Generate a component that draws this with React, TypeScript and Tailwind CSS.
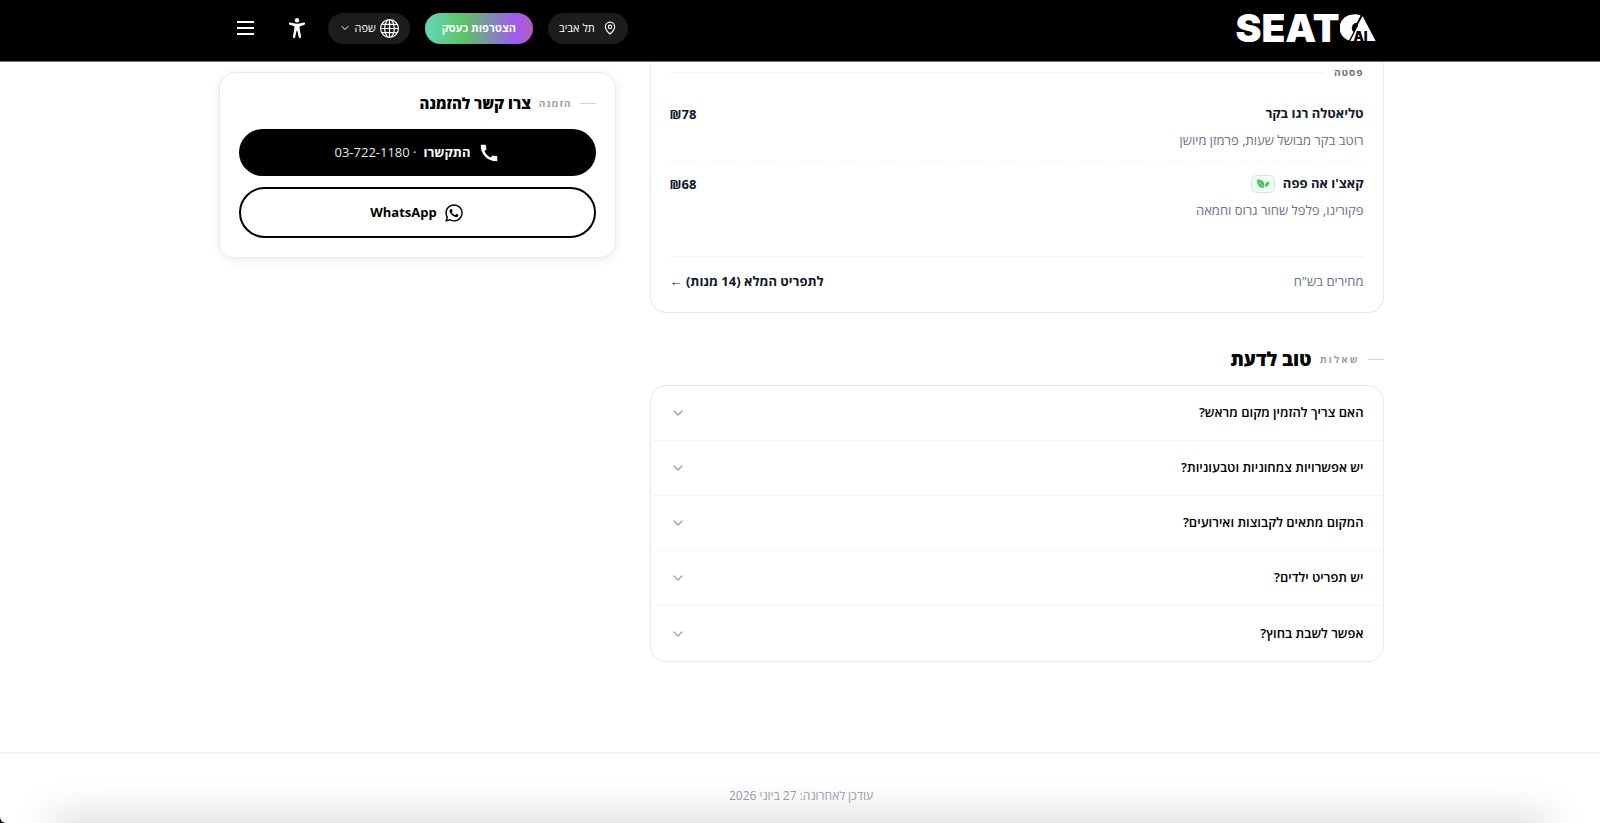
import { useState } from 'react';
import { ChevronDown, MapPin } from 'lucide-react';
import { IoAccessibility } from 'react-icons/io5';
import { MdCall } from 'react-icons/md';
import { BsGlobe } from 'react-icons/bs';
import { FaWhatsapp } from 'react-icons/fa';

interface Dish {
  name: string;
  description: string;
  price: number;
  vegetarian?: boolean;
}

const dishes: Dish[] = [
  { name: 'טליאטלה רגו בקר', description: 'רוטב בקר מבושל שעות, פרמזן מיושן', price: 78 },
  { name: "קאצ'ו אה פפה", description: 'פקורינו, פלפל שחור גרוס וחמאה', price: 68, vegetarian: true },
];

const questions = [
  'האם צריך להזמין מקום מראש?',
  'יש אפשרויות צמחוניות וטבעוניות?',
  'המקום מתאים לקבוצות ואירועים?',
  'יש תפריט ילדים?',
  'אפשר לשבת בחוץ?',
];

function Logo() {
  return (
    <a href="#" dir="ltr" aria-label="SEATO AI" className="flex items-center text-white">
      <span className="font-['Inter',sans-serif] text-[39px] leading-8 font-black">SEAT</span>
      <svg viewBox="0 0 36 32" className="h-8 w-9" aria-hidden="true">
        <path
          d="M20.6 3.4 A13.3 13.3 0 0 0 13.4 2.4 A13.3 13.3 0 0 0 9 28.4 L13.4 20 A5.4 5.4 0 0 1 16.8 10.8 Z"
          fill="#fff"
        />
        <path d="M22.6 4 L35.6 29 H10.4 L17 15.6 A3 3 0 0 0 18 12.6 Z" fill="#fff" />
        <text x="13.5" y="29" fill="#000" fontFamily="Inter" fontSize="13" fontWeight="900">
          AI
        </text>
      </svg>
    </a>
  );
}

function LeafIcon() {
  return (
    <svg viewBox="0 0 14 10" className="h-[10px] w-[14px]" fill="#3fc35a" aria-hidden="true">
      <path d="M1 0.5 C5 0.5 8 2 8.3 5 C8.4 6.5 8.2 7.6 8 8.8 C4.5 9 1 7.5 1 0.5 Z" />
      <path d="M13.2 2.5 C10.5 2.8 9 4.2 9 7.8 C11.8 7.8 13.4 6 13.2 2.5 Z" />
      <path d="M2.5 2.5 L7.5 8" stroke="#f0fdf4" strokeWidth="0.6" />
    </svg>
  );
}

function SectionTitle({ eyebrow, title, large }: { eyebrow: string; title: string; large?: boolean }) {
  return (
    <div className="flex items-center gap-2">
      <span className="h-px w-4 bg-[#d4d4d4]" />
      <span
        className={
          large
            ? 'text-[10px] font-bold tracking-[2px] text-[#a0a0a8]'
            : 'text-[10px] font-bold tracking-[1px] text-[#a0a0a8]'
        }
      >
        {eyebrow}
      </span>
      <h2 className={large ? 'text-[19px] leading-7 font-extrabold' : 'text-[15px] leading-6 font-extrabold'}>
        {title}
      </h2>
    </div>
  );
}

function Header() {
  return (
    <header className="sticky top-0 z-10 border-b border-gray-500 bg-black pl-[2px] text-white">
      <div className="mx-auto flex h-[61px] max-w-[1165px] items-start justify-between pr-2 pl-[7px]">
        <div className="flex h-14 items-center">
          <Logo />
        </div>
        <div className="flex h-14 items-center gap-[11px]">
          <div className="flex items-center gap-[15px]">
            <button className="flex h-[31px] items-center gap-2 rounded-full bg-[#1c1c1c] px-[11px] text-[11px]">
              <MapPin className="size-[14px]" />
              תל אביב
            </button>
            <button className="h-[31px] rounded-full bg-[linear-gradient(90deg,#62d8b8_0%,#5cc266_36%,#a259f5_84%,#b45fb4_100%)] px-[17px] text-[11px] font-bold">
              הצטרפות כעסק
            </button>
            <button className="flex h-[31px] items-center gap-1 rounded-full bg-[#1c1c1c] px-[11px] text-[11px]">
              <BsGlobe className="size-[19px]" />
              שפה
              <ChevronDown className="size-3" />
            </button>
          </div>
          <button aria-label="נגישות" className="flex size-10 items-center justify-center">
            <IoAccessibility className="size-5" />
          </button>
          <button aria-label="תפריט" className="flex size-10 flex-col items-center justify-center gap-1">
            <span className="h-[2px] w-[17px] bg-white" />
            <span className="h-[2px] w-[17px] bg-white" />
            <span className="h-[2px] w-[17px] bg-white" />
          </button>
        </div>
      </div>
    </header>
  );
}

function MenuCard() {
  return (
    <section className="rounded-b-2xl border border-t-0 border-[#e9e9eb] px-[19px]">
      <div className="flex h-5 items-center gap-[10px]">
        <h3 className="text-[10px] font-bold tracking-[1px] text-gray-500">פסטה</h3>
        <span className="h-px flex-1 bg-gray-100" />
      </div>
      <ul className="divide-y divide-dashed divide-gray-100 pt-[10px]">
        {dishes.map((dish) => (
          <li key={dish.name} className="flex h-[70px] items-start justify-between pt-3">
            <div>
              <div className="flex h-5 items-center gap-2">
                <h4 className="text-[13px] font-bold text-gray-900">{dish.name}</h4>
                {dish.vegetarian && (
                  <span
                    title="צמחוני"
                    className="flex h-[18px] w-6 items-center justify-center rounded-md border border-green-200 bg-green-50"
                  >
                    <LeafIcon />
                  </span>
                )}
              </div>
              <p className="mt-2 text-[13px] leading-4 text-gray-500">{dish.description}</p>
            </div>
            <span className="text-[13px] leading-5 font-bold text-gray-900">₪{dish.price}</span>
          </li>
        ))}
      </ul>
      <div className="mt-6 flex h-14 items-start justify-between border-t border-gray-100 pt-[14px] text-[13px] leading-5">
        <span className="text-gray-500">מחירים בש"ח</span>
        <a href="#" className="font-bold text-gray-900">
          לתפריט המלא (14 מנות) ←
        </a>
      </div>
    </section>
  );
}

function Faq() {
  const [open, setOpen] = useState<number | null>(null);

  return (
    <section className="mt-8">
      <SectionTitle eyebrow="שאלות" title="טוב לדעת" large />
      <div className="mt-3 divide-y divide-gray-100 rounded-2xl border border-[#e9e9eb]">
        {questions.map((q, i) => (
          <button
            key={q}
            aria-expanded={open === i}
            onClick={() => setOpen(open === i ? null : i)}
            className="flex h-[55px] w-full items-center justify-between px-[19px] text-[13px] font-semibold"
          >
            {q}
            <ChevronDown className="size-4 text-[#a0a0a8]" />
          </button>
        ))}
      </div>
    </section>
  );
}

function ContactCard() {
  return (
    <aside className="mt-[10px] w-[397px] shrink-0 self-start rounded-2xl border border-[#e9e9eb] px-[19px] pt-[18px] pb-[19px] shadow-[0_2px_10px_rgba(0,0,0,0.09)]">
      <SectionTitle eyebrow="הזמנה" title="צרו קשר להזמנה" />
      <div className="mt-[14px] flex flex-col gap-[11px]">
        <a
          href="tel:03-722-1180"
          className="flex h-[47px] items-center justify-center gap-[7px] rounded-full bg-black text-[13px] text-white"
        >
          <MdCall className="size-[22px]" />
          <span className="font-bold">התקשרו</span>
          <span className="font-medium text-gray-200">
            · <bdi dir="ltr">03-722-1180</bdi>
          </span>
        </a>
        <a
          href="#"
          className="flex h-[51px] items-center justify-center gap-[7px] rounded-full border-2 border-black text-[13px] font-bold"
        >
          <FaWhatsapp className="size-5" />
          WhatsApp
        </a>
      </div>
    </aside>
  );
}

export default function App() {
  return (
    <div dir="rtl" className="min-h-screen bg-black font-['Open_Sans',sans-serif] text-black">
      <div className="flex min-h-screen flex-col rounded-bl-md bg-white">
        <Header />
        <main className="w-full flex-1 pl-[2px]">
          <div className="mx-auto flex max-w-[1165px] gap-[34px]">
            <div className="min-w-0 flex-1">
              <MenuCard />
              <Faq />
            </div>
            <ContactCard />
          </div>
        </main>
        <footer className="h-[71px] border-t-2 border-gray-100 pt-8 pl-[2px] text-center text-[12px] leading-5 text-gray-400">
          עודכן לאחרונה: 27 ביוני 2026
        </footer>
      </div>
      <div className="pointer-events-none fixed inset-x-16 bottom-0 h-0 shadow-[0_8px_40px_10px_rgba(0,0,0,0.25)]" />
    </div>
  );
}
